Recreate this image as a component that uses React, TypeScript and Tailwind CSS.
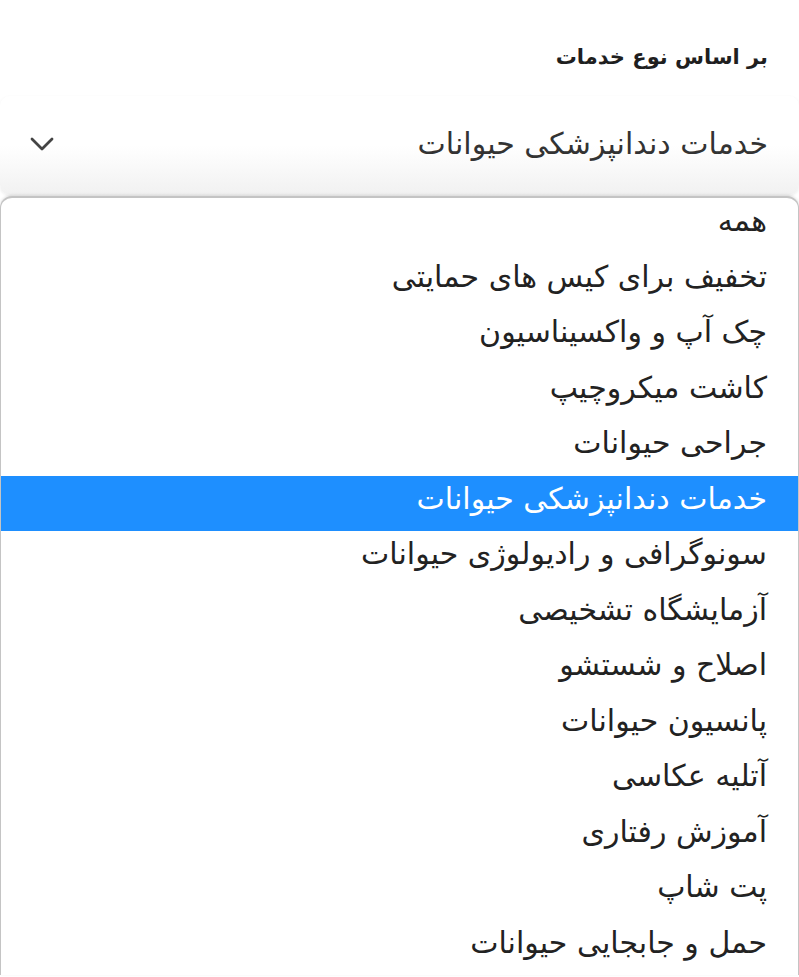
const services = [
  "همه",
  "تخفیف برای کیس های حمایتی",
  "چک آپ و واکسیناسیون",
  "کاشت میکروچیپ",
  "جراحی حیوانات",
  "خدمات دندانپزشکی حیوانات",
  "سونوگرافی و رادیولوژی حیوانات",
  "آزمایشگاه تشخیصی",
  "اصلاح و شستشو",
  "پانسیون حیوانات",
  "آتلیه عکاسی",
  "آموزش رفتاری",
  "پت شاپ",
  "حمل و جابجایی حیوانات",
];

const selected = "خدمات دندانپزشکی حیوانات";

export default function App() {
  return (
    <div
      dir="rtl"
      className="w-[799px] h-[977px] overflow-hidden bg-white text-[#222] font-['DejaVu_Sans','Noto_Sans',sans-serif]"
    >
      <div className="px-[31px] pt-[40px] pb-[22px]">
        <h3 className="text-[21px] font-bold leading-[34px] text-[#1f1f1f]">بر اساس نوع خدمات</h3>
      </div>

      <button className="flex h-[99px] w-full items-center justify-between rounded-[10px] bg-gradient-to-b from-white via-white to-[#f1f1f1] pb-[4px] pl-[30px] pr-[31px] shadow-[0_1px_3px_rgba(0,0,0,0.08)]">
        <span className="text-[30px] text-[#333]">{selected}</span>
        <svg width="24" height="14" viewBox="0 0 24 14" fill="none" className="text-[#444]">
          <path d="M2 2l10 10L22 2" stroke="currentColor" strokeWidth="2.8" strokeLinecap="round" strokeLinejoin="round" />
        </svg>
      </button>

      <ul className="mt-[1px] rounded-t-[12px] border-t-2 border-l border-r border-[#c4c4c4] bg-white shadow-[0_-1px_3px_rgba(0,0,0,0.12)]">
        {services.map((s) => (
          <li
            key={s}
            className={
              s === selected
                ? "flex h-[55.5px] items-center bg-[#1e8fff] px-[31px] pb-[10px] text-[30px] text-white"
                : "flex h-[55.5px] items-center px-[31px] pb-[10px] text-[30px] text-[#222]"
            }
          >
            {s}
          </li>
        ))}
      </ul>
    </div>
  );
}
